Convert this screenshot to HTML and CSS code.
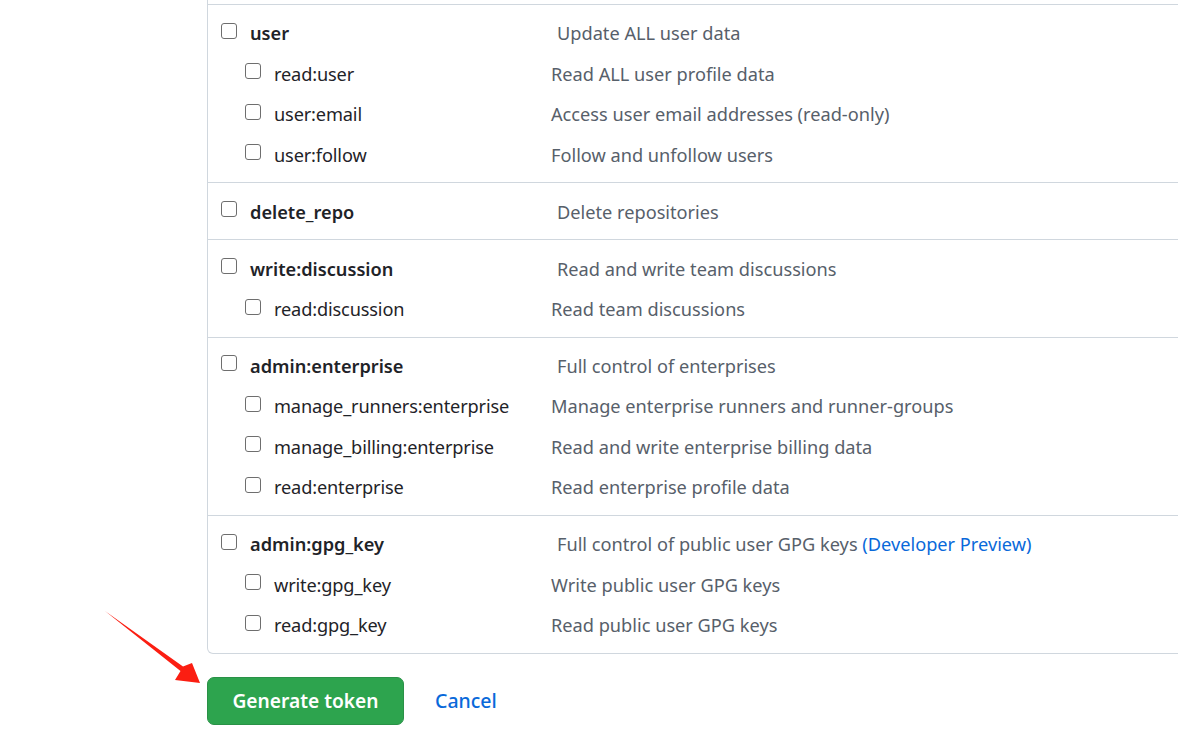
FILE: index.html
```html
<!DOCTYPE html>
<html>
<head>
<meta charset="utf-8">
<link rel="stylesheet" href="styles.css">
</head>
<body>
<div class="page">
  <div class="scopes">
    <div class="group">
      <div class="row parent"><span class="name"><span class="cb"></span><span class="label">user</span></span><span class="desc">Update ALL user data</span></div>
      <div class="row sub"><span class="name"><span class="cb"></span><span class="label">read:user</span></span><span class="desc">Read ALL user profile data</span></div>
      <div class="row sub"><span class="name"><span class="cb"></span><span class="label">user:email</span></span><span class="desc">Access user email addresses (read-only)</span></div>
      <div class="row sub"><span class="name"><span class="cb"></span><span class="label">user:follow</span></span><span class="desc">Follow and unfollow users</span></div>
    </div>
    <div class="group">
      <div class="row parent"><span class="name"><span class="cb"></span><span class="label">delete_repo</span></span><span class="desc">Delete repositories</span></div>
    </div>
    <div class="group">
      <div class="row parent"><span class="name"><span class="cb"></span><span class="label">write:discussion</span></span><span class="desc">Read and write team discussions</span></div>
      <div class="row sub"><span class="name"><span class="cb"></span><span class="label">read:discussion</span></span><span class="desc">Read team discussions</span></div>
    </div>
    <div class="group">
      <div class="row parent"><span class="name"><span class="cb"></span><span class="label">admin:enterprise</span></span><span class="desc">Full control of enterprises</span></div>
      <div class="row sub"><span class="name"><span class="cb"></span><span class="label">manage_runners:enterprise</span></span><span class="desc">Manage enterprise runners and runner-groups</span></div>
      <div class="row sub"><span class="name"><span class="cb"></span><span class="label">manage_billing:enterprise</span></span><span class="desc">Read and write enterprise billing data</span></div>
      <div class="row sub"><span class="name"><span class="cb"></span><span class="label">read:enterprise</span></span><span class="desc">Read enterprise profile data</span></div>
    </div>
    <div class="group">
      <div class="row parent"><span class="name"><span class="cb"></span><span class="label">admin:gpg_key</span></span><span class="desc">Full control of public user GPG keys <a class="link" href="#">(Developer Preview)</a></span></div>
      <div class="row sub"><span class="name"><span class="cb"></span><span class="label">write:gpg_key</span></span><span class="desc">Write public user GPG keys</span></div>
      <div class="row sub"><span class="name"><span class="cb"></span><span class="label">read:gpg_key</span></span><span class="desc">Read public user GPG keys</span></div>
    </div>
  </div>
  <div class="actions">
    <button class="btn-primary">Generate token</button>
    <a class="cancel" href="#">Cancel</a>
  </div>
</div>
<svg class="arrow" width="220" height="700" viewBox="0 0 220 700">
  <polygon points="105,611 183,666.5 192,663 200,683 175,680 180.5,671" fill="#fb1e12"/>
</svg>
</body>
</html>
```

FILE: styles.css
```css
html, body {
  margin: 0;
  padding: 0;
  background: #fff;
  overflow: hidden;
}
body {
  width: 1178px;
  height: 756px;
  position: relative;
  font-family: "Noto Sans", "Open Sans", sans-serif;
  font-size: 18.2px;
  color: #1f2328;
}
.page {
  padding-left: 207px;
  overflow: hidden;
}
.scopes {
  width: 1100px;
  padding-top: 4px;
  border-left: 1px solid #d0d7de;
  border-right: 1px solid #d0d7de;
  border-bottom: 1px solid #d0d7de;
  border-radius: 0 0 6px 6px;
}
.group {
  border-top: 1px solid #d0d7de;
  padding: 8px 0 7.4px;
}
.row {
  display: flex;
  align-items: center;
  height: 40.5px;
}
.name {
  display: flex;
  align-items: center;
  flex: none;
}
.parent .name { padding-left: 13px; width: 330px; }
.sub .name { padding-left: 37px; width: 306px; }
.cb {
  width: 14px;
  height: 14px;
  border: 1.5px solid #6e6e6e;
  border-radius: 3px;
  flex: none;
  margin-top: -5px;
  margin-right: 13px;
}
.parent .label { font-weight: 600; }
.sub .label { letter-spacing: -0.15px; }
.desc {
  color: #57606a;
}
.parent .desc { padding-left: 6px; }
.link {
  color: #0969da;
  text-decoration: none;
}
.actions {
  display: flex;
  align-items: center;
  margin-top: 23px;
}
.btn-primary {
  width: 197px;
  height: 48px;
  background: #2da44e;
  border: 1px solid #2a9147;
  border-radius: 7px;
  color: #fff;
  font-family: inherit;
  font-size: 19.2px;
  font-weight: 600;
  padding: 0;
}
.cancel {
  margin-left: 31px;
  color: #0969da;
  font-size: 19.5px;
  font-weight: 500;
  text-decoration: none;
}
.arrow {
  position: absolute;
  left: 0;
  top: 0;
}
```
